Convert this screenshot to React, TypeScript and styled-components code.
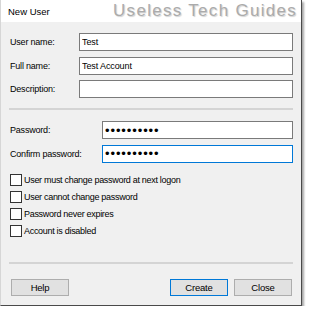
import React from 'react';
import styled, { createGlobalStyle } from 'styled-components';

const GlobalStyle = createGlobalStyle`
    html, body {
        margin: 0;
        padding: 0;
        background: #ffffff;
    }
    body {
        font-family: "Liberation Sans", Arial, sans-serif;
    }
`

const Window = styled.div`
    position: relative;
    box-sizing: border-box;
    width: 302px;
    height: 306px;
    display: flex;
    flex-direction: column;
    border-left: 1px solid #d6d6d6;
    border-right: 1px solid #4a4a4a;
    border-bottom: 1px solid #4a4a4a;
    box-shadow: 2px 2px 2px rgba(0, 0, 0, 0.35);
    background: #f0f0f0;
`

const TitleBar = styled.div`
    position: relative;
    height: 22px;
    display: flex;
    align-items: center;
    padding-left: 7px;
    background: #ffffff;
    font-size: 9.5px;
    color: #000;
`

const Watermark = styled.span`
    position: absolute;
    left: 112px;
    top: 2px;
    font-size: 17px;
    line-height: 17px;
    letter-spacing: 1.3px;
    color: #ababab;
    text-shadow: 1px 1px 1px rgba(0, 0, 0, 0.18), -1px -1px 0 rgba(255, 255, 255, 0.8);
    white-space: nowrap;
    pointer-events: none;
`

const Body = styled.div`
    flex: 1;
    display: flex;
    flex-direction: column;
    padding: 11px 8px 9px 8px;
`

const FieldGrid = styled.div<{ $labelWidth: number }>`
    display: grid;
    grid-template-columns: ${p => p.$labelWidth}px 1fr;
    grid-auto-rows: 18px;
    row-gap: 5.5px;
    align-items: center;
`

const Label = styled.label`
    font-size: 9px;
    letter-spacing: -0.2px;
    color: #000;
    padding-left: 1px;
`

const TextBox = styled.input<{ $focused?: boolean; $masked?: boolean }>`
    box-sizing: border-box;
    height: 18px;
    width: 100%;
    margin: 0;
    padding: 0 2px;
    border: 1px solid ${p => (p.$focused ? '#0078d7' : '#7a7a7a')};
    background: #ffffff;
    font-family: "Liberation Sans", Arial, sans-serif;
    font-size: ${p => (p.$masked ? '13px' : '9px')};
    letter-spacing: ${p => (p.$masked ? '0.9px' : '-0.1px')};
    color: #000;
    outline: none;
`

const Separator = styled.hr`
    margin: 0;
    border: none;
    border-top: 2px solid #d4d4d4;
`

const Divider = styled(Separator)<{ $gap: number }>`
    margin-top: ${p => p.$gap}px;
    margin-bottom: 11px;
`

const CheckList = styled.div`
    display: flex;
    flex-direction: column;
    margin-top: 9px;
    padding-left: 1px;
`

const CheckRow = styled.label`
    height: 17px;
    display: flex;
    align-items: center;
    gap: 2px;
    font-size: 9px;
    letter-spacing: -0.3px;
    color: #000;
`

const CheckBox = styled.span`
    box-sizing: border-box;
    width: 12px;
    height: 12px;
    border: 1px solid #333333;
    background: #ffffff;
`

const Footer = styled.div`
    margin-top: auto;
    display: flex;
    flex-direction: column;
`

const ButtonRow = styled.div`
    display: flex;
    align-items: center;
    gap: 6px;
    margin-top: 15px;
    padding: 0 1px 0 2px;
`

const Spacer = styled.div`
    flex: 1;
`

const Button = styled.button<{ $primary?: boolean }>`
    box-sizing: border-box;
    width: 58px;
    height: 17px;
    margin: 0;
    padding: 0;
    border: 1px solid ${p => (p.$primary ? '#0078d7' : '#adadad')};
    background: #e1e1e1;
    font-family: "Liberation Sans", Arial, sans-serif;
    font-size: 9.5px;
    letter-spacing: -0.2px;
    color: #000;
`

const options = [
    'User must change password at next logon',
    'User cannot change password',
    'Password never expires',
    'Account is disabled',
]

export default function App() {
    return (
        <>
            <GlobalStyle />
            <Window>
                <TitleBar>
                    New User
                    <Watermark>Useless Tech Guides</Watermark>
                </TitleBar>
                <Body>
                    <FieldGrid $labelWidth={70}>
                        <Label>User name:</Label>
                        <TextBox readOnly defaultValue="Test" />
                        <Label>Full name:</Label>
                        <TextBox readOnly defaultValue="Test Account" />
                        <Label>Description:</Label>
                        <TextBox readOnly defaultValue="" />
                    </FieldGrid>
                    <Divider $gap={10} />
                    <FieldGrid $labelWidth={93}>
                        <Label>Password:</Label>
                        <TextBox readOnly type="password" $masked defaultValue="xxxxxxxxxx" />
                        <Label>Confirm password:</Label>
                        <TextBox readOnly type="password" $masked $focused defaultValue="xxxxxxxxxx" />
                    </FieldGrid>
                    <CheckList>
                        {options.map(o => (
                            <CheckRow key={o}>
                                <CheckBox />
                                {o}
                            </CheckRow>
                        ))}
                    </CheckList>
                    <Footer>
                        <Separator />
                        <ButtonRow>
                            <Button>Help</Button>
                            <Spacer />
                            <Button $primary>Create</Button>
                            <Button>Close</Button>
                        </ButtonRow>
                    </Footer>
                </Body>
            </Window>
        </>
    )
}
